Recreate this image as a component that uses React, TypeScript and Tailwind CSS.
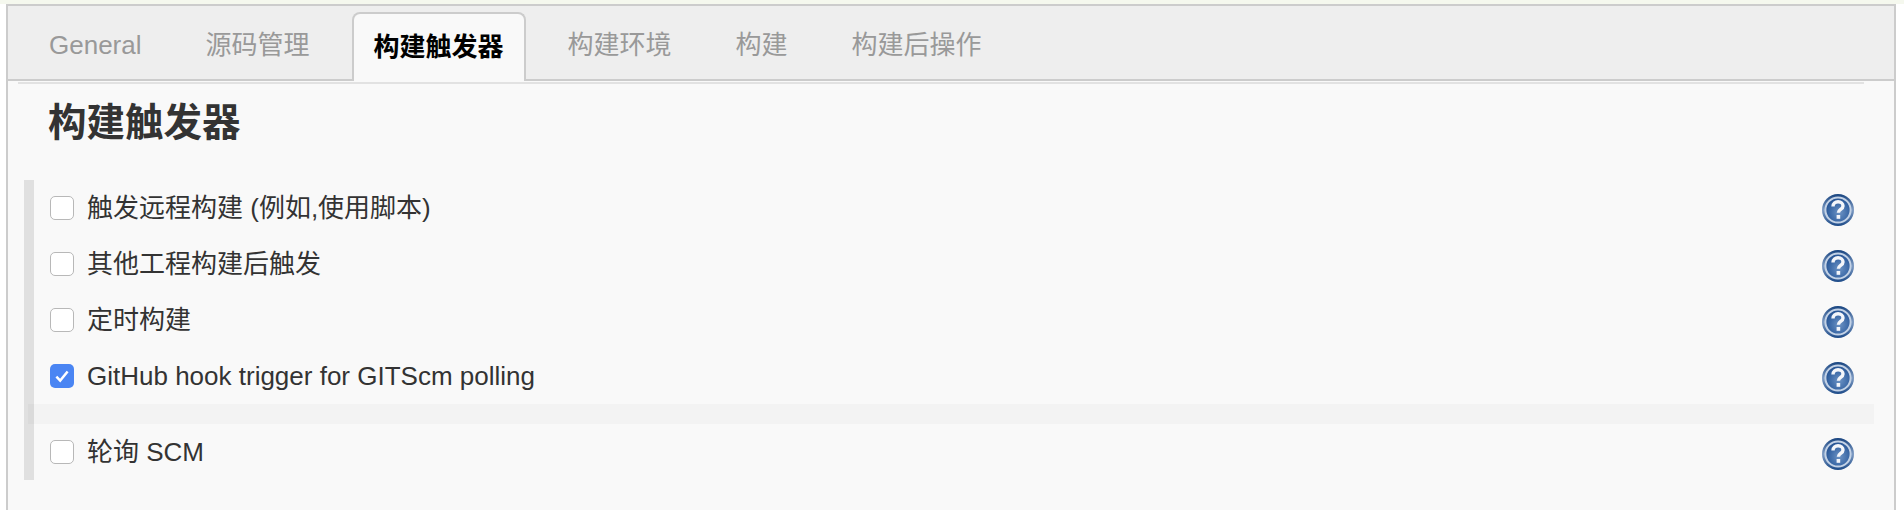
import { useState } from "react";

const tabs = ["General", "源码管理", "构建触发器", "构建环境", "构建", "构建后操作"];

function HelpIcon() {
  return (
    <svg width="32" height="32" viewBox="0 0 32 32" className="mt-1 shrink-0 blur-[0.4px]">
      <defs>
        <linearGradient id="help-edge" x1="0" y1="0" x2="0" y2="1">
          <stop offset="0%" stopColor="#17437f" />
          <stop offset="50%" stopColor="#7f9cc4" />
          <stop offset="100%" stopColor="#1c4a88" />
        </linearGradient>
        <radialGradient id="help-fill" cx="55%" cy="60%" r="60%">
          <stop offset="0%" stopColor="#6d93c4" />
          <stop offset="65%" stopColor="#3a68a6" />
          <stop offset="100%" stopColor="#224f8f" />
        </radialGradient>
      </defs>
      <circle cx="16" cy="16" r="16" fill="url(#help-edge)" />
      <circle cx="16" cy="16" r="12.6" fill="url(#help-fill)" stroke="#c3d2e6" strokeWidth="2" />
      <path
        d="M11 12.6c0-3 2.2-4.8 5.1-4.8 2.9 0 4.9 1.7 4.9 4.1 0 3.5-4.6 3.6-4.6 6.9"
        fill="none"
        stroke="#f4f6fa"
        strokeWidth="3.4"
      />
      <rect x="14.6" y="21" width="3.6" height="3.8" fill="#f4f6fa" />
    </svg>
  );
}

function TriggerRow({ label, checked }: { label: string; checked?: boolean }) {
  const [on, setOn] = useState(!!checked);

  return (
    <div className="flex h-14 items-center justify-between pl-4 pr-10">
      <label className="flex items-center gap-[13px]">
        <input type="checkbox" checked={on} onChange={() => setOn(!on)} className="sr-only" />
        <span
          className={
            on
              ? "flex h-6 w-6 items-center justify-center rounded-[5px] bg-[#4a85f3]"
              : "h-6 w-6 rounded-[5px] border border-[#b8b8b8] bg-white"
          }
        >
          {on && (
            <svg width="18" height="18" viewBox="0 0 16 16">
              <path d="M3 8.5l3.4 3.6L13 4" fill="none" stroke="#fff" strokeWidth="2.2" />
            </svg>
          )}
        </span>
        <span className="text-[26px] leading-none text-[#333]">{label}</span>
      </label>
      <HelpIcon />
    </div>
  );
}

export default function App() {
  return (
    <div className="h-[510px] bg-white font-['Liberation_Sans','Noto_Sans_CJK_SC',sans-serif]">
      <div className="h-1 bg-[#f5f8ee]" />
      <div className="mx-[6px] mr-2 flex h-[506px] flex-col border-x-2 border-t-2 border-[#ccc] bg-[#f9f9f9]">
        <div className="flex h-[75px] items-end gap-[22px] border-b-2 border-[#ccc] bg-[#eee] pl-5">
          {tabs.map((tab) =>
            tab === "构建触发器" ? (
              <div
                key={tab}
                className="-mb-[2px] -mx-[1px] flex h-[69px] items-center rounded-t-lg border-x-2 border-t-2 border-[#ccc] bg-[#f9f9f9] px-5 pb-px text-[26px] font-bold text-black"
              >
                {tab}
              </div>
            ) : (
              <div key={tab} className="flex h-[68px] items-center px-[21px] text-[26px] text-[#999]">
                {tab}
              </div>
            )
          )}
        </div>

        <div className="ml-[10px] mr-[30px] mt-px h-[2px] bg-[#e2e2e2]" />
        <h1 className="ml-10 mt-[15px] text-[38.5px] leading-[48px] font-bold text-[#333]">构建触发器</h1>

        <div className="ml-4 mt-[33px] border-l-[10px] border-[#e0e0e0]">
          <TriggerRow label="触发远程构建 (例如,使用脚本)" />
          <TriggerRow label="其他工程构建后触发" />
          <TriggerRow label="定时构建" />
          <TriggerRow label="GitHub hook trigger for GITScm polling" checked />
          <div className="relative -ml-[6px] mr-[20px] h-5 bg-black/[0.025]" />
          <TriggerRow label="轮询 SCM" />
        </div>
      </div>
    </div>
  );
}
